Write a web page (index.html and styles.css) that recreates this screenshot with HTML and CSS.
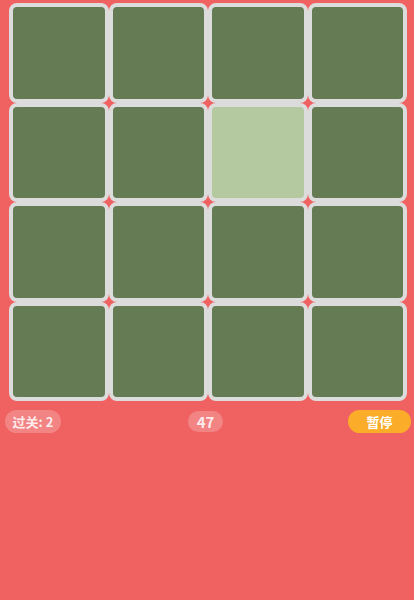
FILE: index.html
```html
<!DOCTYPE html>
<html>
<head>
<meta charset="utf-8">
<link rel="stylesheet" href="styles.css">
</head>
<body>
<div class="page">
  <div class="board">
    <div class="tile"></div><div class="tile"></div><div class="tile"></div><div class="tile"></div>
    <div class="tile"></div><div class="tile"></div><div class="tile lit"></div><div class="tile"></div>
    <div class="tile"></div><div class="tile"></div><div class="tile"></div><div class="tile"></div>
    <div class="tile"></div><div class="tile"></div><div class="tile"></div><div class="tile"></div>
  </div>
  <div class="bar">
    <div class="pill level">过关: 2</div>
    <div class="pill timer">47</div>
    <div class="pill pause">暂停</div>
  </div>
</div>
</body>
</html>
```

FILE: styles.css
```css
html, body {
  margin: 0;
  padding: 0;
  background: #f06262;
  font-family: "Noto Sans CJK SC", "Noto Sans", sans-serif;
}
.page {
  width: 414px;
  height: 600px;
}
.board {
  display: grid;
  grid-template-columns: repeat(4, 99.5px);
  grid-auto-rows: 99.5px;
  gap: 0;
  padding: 3px 0 0 9px;
}
.tile {
  box-sizing: border-box;
  background: #647b54;
  border: 4px solid #dddcdc;
  border-radius: 8px;
}
.tile.lit {
  background: #b4c9a0;
}
.bar {
  display: flex;
  justify-content: space-between;
  align-items: center;
  padding: 9px 3px 0 5px;
}
.pill {
  height: 23px;
  line-height: 23px;
  border-radius: 12px;
  font-size: 13px;
  font-weight: bold;
  color: #fff;
  text-align: center;
}
.level {
  width: 56px;
  background: rgba(255, 255, 255, 0.22);
  color: rgba(255, 255, 255, 0.85);
}
.timer {
  width: 35px;
  height: 21px;
  line-height: 21px;
  font-size: 15px;
  background: rgba(255, 255, 255, 0.22);
  color: rgba(255, 255, 255, 0.85);
  margin-left: 2px;
}
.pause {
  width: 63px;
  background: #fbac28;
}
```
